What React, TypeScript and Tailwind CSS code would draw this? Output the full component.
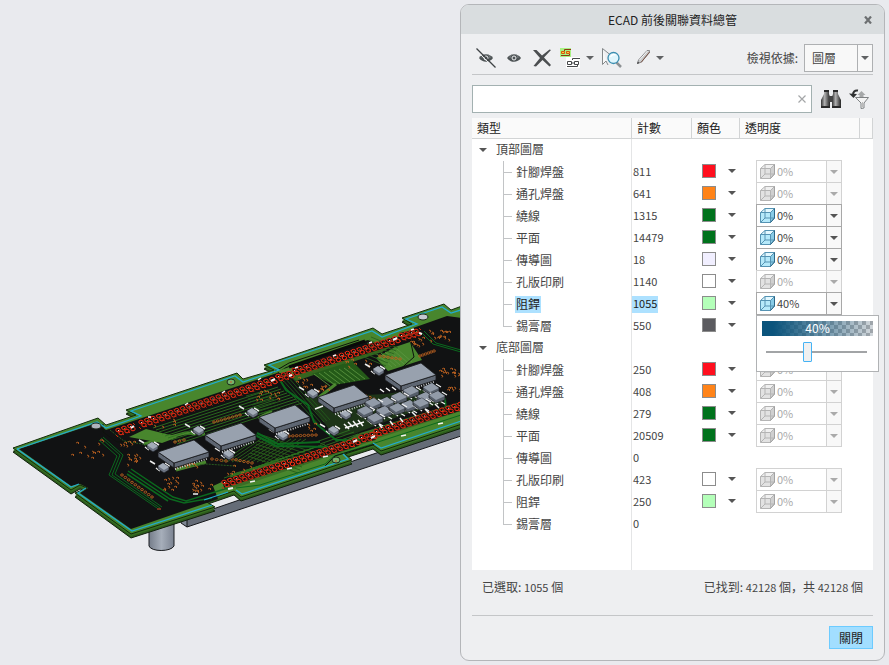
import { useState } from "react";
import { clsx } from "clsx";

type Layer = {
  name: string;
  count: number;
  color?: string;
  opacity?: "on" | "off";
};

const groups: { name: string; layers: Layer[] }[] = [
  {
    name: "頂部圖層",
    layers: [
      { name: "針腳焊盤", count: 811, color: "bg-[#ff0f1e]", opacity: "off" },
      { name: "通孔焊盤", count: 641, color: "bg-[#ff8318]", opacity: "off" },
      { name: "繞線", count: 1315, color: "bg-[#00721c]", opacity: "on" },
      { name: "平面", count: 14479, color: "bg-[#00721c]", opacity: "on" },
      { name: "傳導圖", count: 18, color: "bg-[#f1efff]", opacity: "on" },
      { name: "孔版印刷", count: 1140, color: "bg-white", opacity: "off" },
      { name: "阻銲", count: 1055, color: "bg-[#b4ffb9]", opacity: "on" },
      { name: "錫膏層", count: 550, color: "bg-[#5b5b5f]" },
    ],
  },
  {
    name: "底部圖層",
    layers: [
      { name: "針腳焊盤", count: 250, color: "bg-[#ff0f1e]", opacity: "off" },
      { name: "通孔焊盤", count: 408, color: "bg-[#ff8318]", opacity: "off" },
      { name: "繞線", count: 279, color: "bg-[#00721c]", opacity: "off" },
      { name: "平面", count: 20509, color: "bg-[#00721c]", opacity: "off" },
      { name: "傳導圖", count: 0 },
      { name: "孔版印刷", count: 423, color: "bg-white", opacity: "off" },
      { name: "阻銲", count: 250, color: "bg-[#b4ffb9]", opacity: "off" },
      { name: "錫膏層", count: 0 },
    ],
  },
];

function Caret({ className = "text-[#606264]" }: { className?: string }) {
  return (
    <svg viewBox="0 0 8 4" className={clsx("h-1 w-2 shrink-0", className)} fill="currentColor" aria-hidden="true">
      <path d="M0 0h8L4 4z" />
    </svg>
  );
}

function CubeIcon({ off }: { off: boolean }) {
  const line = off ? "#b4b4b4" : "#5593b3";
  return (
    <svg viewBox="0 0 15 15" className="size-[15px] shrink-0" fill="none" stroke={line} aria-hidden="true">
      <path d="M.5 4.5 5 .5h9.5l-4 4z" fill={off ? "#f0f0f0" : "#e3f8ff"} />
      <path d="M.5 4.5h10v10H.5z" fill={off ? "#e2e2e2" : "#b5e9fa"} />
      <path d="M10.5 4.5l4-4v9.500l-4 4.500z" fill={off ? "#cfcfcf" : "#88cbe6"} />
      <path d="M5 .5v9.500h9.500M5 10 .5 14.500" />
      <path d="M14.500.5V10l-4 4.500" stroke={off ? "#a2a2a2" : "#2f6785"} />
    </svg>
  );
}

/* ---------- board ---------- */

const outline =
  "13,448 98,418 106,425 136,415 126,410 237,373 243,379 274,370 264,365 373,328 382,334 412,324 402,318 444,304 451,310 462,306 462,424 381,451 373,445 345,454 352,460 241,497 234,491 205,501 215,507 131,534 75,493 87,488 80,485 71,490";

const cyanTop =
  "17,449 97,422 106,428 141,416 131,411 235,376 243,382 279,370 269,365 372,331 382,337 417,324 406,319 442,307 451,313 461,310";
const cyanBottom = "17,449 71,487 79,484 M86,488 78,493 132,531 212,505 M204,500 228,492 M236,490 242,494 348,459 343,454 M373,443 381,448 461,421";

const chips = [
  [158, 452],
  [205, 435],
  [259, 417],
  [318, 397],
  [385, 375],
];

const smallParts = [
  [152, 446], [198, 430], [252, 412], [163, 467], [228, 454], [282, 435], [312, 393], [333, 430], [378, 370], [345, 414],
];

const cluster = [
  [431, 388], [411, 391], [425, 397], [437, 396], [399, 397], [409, 405], [421, 403], [386, 402], [373, 403], [365, 411], [384, 411], [397, 408], [375, 418],
];

// x1, y1, x2, y2 of every run of pins
const pinRuns = [
  [119, 431, 131, 427],
  [142, 423, 273, 380],
  [279, 377, 290, 374],
  [295, 371, 396, 339],
  [402, 336, 417, 332],
  [225, 483, 356, 441],
  [362, 438, 373, 435],
  [377, 432, 461, 405],
];

// x, y, width, height, amount
const viaFields = [
  [68, 436, 34, 22, 12], [116, 442, 22, 5, 7], [126, 454, 18, 11, 10], [161, 477, 16, 14, 13], [190, 481, 20, 10, 15],
  [178, 462, 22, 4, 9], [256, 390, 22, 10, 14], [150, 418, 28, 8, 6],
  [296, 378, 14, 12, 8], [316, 385, 14, 6, 8], [408, 336, 14, 9, 11],
  [429, 330, 20, 10, 16], [438, 368, 22, 8, 16], [446, 386, 15, 5, 6], [340, 358, 30, 10, 8],
  [305, 418, 10, 14, 6], [350, 398, 18, 6, 6], [400, 385, 14, 6, 5], [225, 465, 40, 10, 10],
];

// x1, y1, x2, y2, amount
const viaRows = [
  [122, 475, 152, 497, 10], [214, 422, 240, 415, 8], [289, 436, 316, 435, 8], [380, 356, 400, 359, 6], [420, 356, 434, 351, 6],
  [232, 459, 252, 463, 6], [212, 459, 226, 461, 4], [176, 467, 190, 463, 4], [175, 442, 184, 440, 3], [366, 396, 374, 399, 3],
];

// small repeatable noise in 0..1
function noise(n: number) {
  const v = Math.sin(n * 127.1 + 11.7) * 43758.5453;
  return v - Math.floor(v);
}

function Pins() {
  return (
    <g>
      {pinRuns.map(([x1, y1, x2, y2]) => (
        <path key={x1} d={`M${x1 - 2} ${y1 + 1}L${x2 + 2} ${y2 + 1}`} stroke="#1a1410" strokeWidth="8" />
      ))}
      <g fill="#15100d" stroke="#f02c14" strokeWidth="1">
        {pinRuns.flatMap(([x1, y1, x2, y2]) => {
          const n = Math.max(2, Math.round((x2 - x1) / 6));
          return Array.from({ length: n + 1 }, (_, i) => {
            const x = x1 + ((x2 - x1) * i) / n;
            const y = y1 + ((y2 - y1) * i) / n;
            return (
              <g key={`${x1}-${i}`}>
                <path d={`M${x - 3} ${y + 4}l2 2M${x + 2} ${y - 4}l2 2`} stroke="#c8280e" />
                <ellipse cx={x - 1} cy={y - 1} rx="2.200" ry="1.800" />
                <ellipse cx={x + 2} cy={y + 2} rx="2.200" ry="1.800" />
                <path d={`M${x - 1} ${y - 1}h1v1h-1z`} stroke="none" fill={i % 2 ? "#58963c" : "#d0d0c0"} />
              </g>
            );
          });
        })}
      </g>
    </g>
  );
}

function Vias() {
  return (
    <g fill="none" stroke="#b9601f" strokeWidth=".9">
      {viaFields.flatMap(([x, y, w, h, n], f) =>
        Array.from({ length: n }, (_, i) => {
          const vx = Math.round(x + noise(f * 31 + i) * w);
          const vy = Math.round(y + noise(f * 57 + i * 3 + 1) * h);
          return <path key={`${f}-${i}`} d={i % 2 ? `M${vx} ${vy}l2-1 1 1-1 1` : `M${vx} ${vy}l2 1-1 1.500`} />;
        })
      )}
      {viaRows.flatMap(([x1, y1, x2, y2, n]) =>
        Array.from({ length: n }, (_, i) => (
          <ellipse key={`${x1}-${i}`} cx={x1 + ((x2 - x1) * i) / (n - 1)} cy={y1 + ((y2 - y1) * i) / (n - 1)} rx="1.400" ry="1.100" />
        ))
      )}
    </g>
  );
}

function fan(n: number, from: number[], to: number[], step: number[]) {
  return Array.from({ length: n }, (_, i) => {
    const dx = step[0] * i;
    const dy = step[1] * i;
    return `M${from[0] + dx} ${from[1] + dy}L${to[0] + dx} ${to[1] + dy}`;
  }).join("");
}

function Board() {
  return (
    <svg viewBox="0 0 460 665" className="h-auto w-full" role="img" aria-label="PCB">
      <defs>
        <linearGradient id="post">
          <stop offset="0" stopColor="#757d8a" />
          <stop offset=".5" stopColor="#a6aeba" />
          <stop offset="1" stopColor="#7b8391" />
        </linearGradient>
      </defs>
      <path d="M149 515v31c2 6 22 6 25 0v-34z" fill="url(#post)" stroke="#1b1d20" />
      <path d="M181 520 461 424v12L187 527z" fill="#656c77" stroke="#15171a" />
      <path d="M181 519v4l6 4v-9z" fill="#7d8592" stroke="#15171a" />
      <polygon points={outline} transform="translate(0 4)" fill="#2c5a1c" stroke="#10200b" />
      <polygon points={outline} transform="translate(0 2)" fill="#376f22" />
      <polygon points={outline} fill="#48862d" stroke="#122b0b" />

      {/* dark solder mask */}
      <path
        d="M19 449 97 423 106 430 277 373 286 367 361 342 368 340 376 344 411 333 413 328 447 316 461 318V402L378 427 360 436 224 481 213 486 218 499 131 529 80 493 88 488 80 484 71 486z"
        fill="#111213"
      />
      <path d="M287 374 364 349 376 350 398 338 399 342 382 352 296 381z" fill="#35651f" />
      <path d="M129 437 146 429 178 437 162 443z" fill="#48862d" />
      <path d="M395 347 410 342 422 360 388 371 376 358z" fill="#48862d" />
      <path d="M312 374 352 361 370 379 334 385z" fill="#245a18" />
      <path d="M278 371 292 366 297 373 284 380z" fill="#48862d" />
      <path d="M231 474 262 465 330 448 360 433 440 409 461 402V411L376 439 352 449 244 485 226 490z" fill="#3a6d26" />
      <path d="M305 398 320 417 334 436 354 434 400 416 443 403 436 392 420 389 385 394z" fill="#1d3418" />
      <path d="M144 444 185 433 205 434M176 470 206 462M258 418 272 411M318 398 336 384" stroke="#48862d" strokeWidth="3" fill="none" />
      <path d="M289 367 365 341" stroke="#090a09" strokeWidth="3" />

      <g fill="none" stroke="#2c7020" strokeWidth=".9">
        <path d={fan(9, [153, 428], [278, 387], [3, 2])} />
        <path d={fan(9, [246, 396], [268, 390], [2, 3])} stroke="#255b1c" />
        <path d={fan(11, [222, 462], [256, 439], [5, 0])} stroke="#2a631c" />
        <path d={fan(9, [224, 478], [277, 460], [6, -2])} />
        <path d={fan(8, [262, 435], [312, 452], [-2, 3])} stroke="#285f1b" />
        <path d={fan(8, [314, 374], [330, 386], [5, -1])} stroke="#59923e" />
        <path d={fan(5, [278, 379], [318, 424], [3, -1])} stroke="#225b1c" />
        <path d={fan(6, [377, 354], [392, 367], [4, -1])} stroke="#5a9440" />
        <path d={fan(7, [359, 355], [386, 366], [2, -3])} stroke="#28601d" />
        <path d={fan(6, [316, 442], [350, 430], [4, 2])} />
      </g>
      <g fill="none" stroke="#0b681e" strokeWidth="1">
        <path d="M101 438 120 455 112 475 160 508M99 440 117 456 109 475 157 508M103 437 123 455 115 474 162 507" />
        <path d="M128 471 170 499 184 503 212 498M131 469 173 497 186 501 228 488M127 474 168 501" strokeWidth="1.500" />
        <path d="M255 435 276 446 330 447M257 433 278 444 320 442" strokeWidth="2" />
        <path d="M280 380 286 390 308 405 314 422 336 440 370 440" strokeWidth="2" />
        <path d="M236 488 260 485 325 464 334 456 375 443 461 415" />
        <path d="M422 333 433 344 461 352M424 331 436 343 461 350" />
        <path d="M439 394 445 399 446 409" strokeWidth="2" />
      </g>
      <g fill="none" stroke="#0e120d" strokeWidth="1">
        <path d="M103 424v8l14 10 12-1M272 373l17-10 70-23M413 333l-3 6 4 18-18 16M325 466l10-10 40-12" />
      </g>
      <path d="M176 468 206 464 235 466M110 430 124 441 160 447" stroke="#275b20" strokeDasharray="2 1" fill="none" />

      <polyline points={cyanTop} fill="none" stroke="#22abd0" strokeWidth="1.300" />
      <path d={`M${cyanBottom}`} fill="none" stroke="#22abd0" strokeWidth="1.300" />

      <Vias />
      <Pins />

      {/* mounting holes and drill marks */}
      <g stroke="#1d2a1c">
        <ellipse cx="96" cy="426" rx="5" ry="3" fill="#aeb4bb" />
        <ellipse cx="423" cy="317" rx="5" ry="3" fill="#c4c9d0" />
        <ellipse cx="231" cy="382" rx="4" ry="3" fill="#75b56c" />
        <ellipse cx="336" cy="460" rx="4" ry="3" fill="#75b56c" />
      </g>
      <g fill="none" stroke="#f2f2f2" strokeWidth="2">
        <path d="M131 428l3-2M271 381l4-2M289 376l3-1M393 340l4-2M419 333l3 1M353 442l4-2M371 438l4-2M228 489l5-1" />
        <path d="M148 417h3M185 405l3-2M222 393l3-2M258 380l3-2M295 368l3-1M333 356l3-1M369 343l3-1M411 330l3-1M193 494h5M250 482l5-1M287 469l5-1M323 457l5-1M401 436l5-1M438 424l5-1" strokeWidth="1.500" />
      </g>
      <g stroke="#d4582a" strokeWidth="1.200">
        <path d="M100 440h3M157 509h4M230 382h2M335 461h2" />
      </g>

      {smallParts.map(([x, y]) => (
        <g key={`${x}-${y}`} transform={`translate(${x} ${y})`}>
          <path d="M-7 1l4 3M2-4l5 3M-13-6l5 3" stroke="#ececec" strokeWidth="1.500" />
          <path d="M-5-1 0-4 6 0V3L1 6-5 2z" fill="#6a7280" stroke="#16181b" strokeWidth=".7" />
          <path d="M-5-1 0-4 6 0 1 3z" fill="#a3acb8" />
        </g>
      ))}
      {chips.map(([x, y]) => (
        <g key={x} transform={`translate(${x} ${y})`}>
          <path d="M17 17 50 6" stroke="#d4d6d8" strokeWidth="2.500" strokeDasharray="1 1.500" />
          <path d="M0 0v5l16 11V11zM16 11v5l35-11V0z" fill="#5f6773" stroke="#16181b" strokeWidth=".8" />
          <path d="M0 0 36-12 51 0 16 11z" fill="#98a1ae" stroke="#16181b" strokeWidth=".8" />
        </g>
      ))}
      {cluster.map(([x, y]) => (
        <g key={`${x}-${y}`} transform={`translate(${x} ${y})`}>
          <path d="M-8 2l5 4M-3 5l4 3M3 5l5 3M5-4l5 3" stroke="#f2f2f2" strokeWidth="1.300" />
          <path d="M-8-1 1-5 8 0V4L-1 7-8 2z" fill="#565e69" stroke="#16181b" strokeWidth=".7" />
          <path d="M-8-1 1-5 8 0-1 4z" fill="#929ba8" />
        </g>
      ))}
      <path d="M344 424l5 5M348 422l5 5M353 421l5 6M358 420l5 6M345 428l19-6M380 389l4 3M386 388l4 3M392 387l4 3M379 424l3 4M390 421l3 4M400 418l3 4M412 412l4 4M425 409l4 4M435 404l4 4M315 409l8-3" stroke="#f5f5f5" strokeWidth="1.500" />
    </svg>
  );
}

/* ---------- toolbar icons ---------- */

function EyeIcon({ hidden = false }: { hidden?: boolean }) {
  return (
    <svg viewBox="0 0 20 20" className="size-5" fill="none" aria-hidden="true">
      <path d="M3 10C6.500 5 13.500 5 17 10 13.500 15 6.500 15 3 10z" fill="#4d5355" />
      <path d="M6 10c0-2 1-3 2-3.500M14 10c0-2-1-3-2-3.500" stroke="#8b9092" strokeWidth=".8" />
      <circle cx="10" cy="10" r="2" stroke="#eeeff1" strokeWidth="1" />
      {hidden && (
        <>
          <path d="M0 2 18 20" stroke="#eeeff1" strokeWidth="1" />
          <path d="M.5.5l19 19" stroke="#3e4244" strokeWidth="1.200" />
        </>
      )}
    </svg>
  );
}

function CrossIcon() {
  return (
    <svg viewBox="0 0 20 20" className="size-5" aria-hidden="true">
      <path d="M1 2h3.500L10 7.500 17.500 1.500 19 2l-7 7.500L19 17l-1.500 1.500L10.500 12 4 18.500 1.500 18 8 10z" fill="#4b4e50" />
    </svg>
  );
}

function LayersIcon() {
  return (
    <svg viewBox="0 0 20 20" className="size-5" fill="none" aria-hidden="true">
      <path d="M0 0h11v9H0z" fill="#a8f283" />
      <path d="M4.500 3V1.500H11M1 7.500h8.500V6" stroke="#8a3b12" />
      <path d="M1.500 3.500h3v2h-3zM6.500 3.500h3v2h-3z" fill="#ffc83c" stroke="#d4560e" />
      <path d="M6 9h14v11H6z" fill="#fff" />
      <path d="M12.500 12v-1.500H20M7 18.500h10.500V17M7.500 13.500h4v3h-4zM14.500 13.500h4v3h-4zM11.500 15h3" stroke="#46484a" />
    </svg>
  );
}

function PickIcon() {
  return (
    <svg viewBox="0 0 20 20" className="size-5" fill="none" aria-hidden="true">
      <path d="M.5.5v16L4 13l2 4M.5.5 11 9" fill="#f8f8f8" stroke="#85898b" />
      <path d="m14.500 14.500 4.500 4.500" stroke="#8d9194" strokeWidth="2.500" />
      <circle cx="11.500" cy="10" r="5.500" fill="#e0f6fd" stroke="#3c8eb0" strokeWidth="1.300" />
      <path d="M8.500 9c1-2 3-3 5-2" stroke="#fff" strokeWidth="1.500" />
    </svg>
  );
}

function PencilIcon() {
  return (
    <svg viewBox="0 0 20 20" className="size-5" fill="none" aria-hidden="true">
      <path d="m7.500 15.500 1-3.500L17 2.500h2.500v2L11.500 14z" fill="#c9cacb" stroke="#77797b" strokeWidth=".8" />
      <path d="m11 14.500 8.500-10.500" stroke="#7c5648" strokeWidth="1" />
      <path d="m9.500 12 8-9" stroke="#f6f6f6" strokeWidth="1" />
      <path d="m7 16 .8-2.500L9.500 15z" fill="#444" />
    </svg>
  );
}

function BinocularsIcon() {
  return (
    <svg viewBox="0 0 22 20" className="h-5 w-[22px]" aria-hidden="true">
      <defs>
        <linearGradient id="barrel">
          <stop offset="0" stopColor="#333" />
          <stop offset=".4" stopColor="#b0b0b0" />
          <stop offset="1" stopColor="#242424" />
        </linearGradient>
      </defs>
      <path d="M4 1h5v4l1 3v11H1v-8l3-6z" fill="url(#barrel)" />
      <path d="M13 1h5v4l3 6v8h-9V8l1-3z" fill="url(#barrel)" />
      <path d="M9 7h4v6H9z" fill="#444" />
      <path d="M4 1h5v2H4zM13 1h5v2h-5zM1 17h9v2H1zM12 17h9v2h-9z" fill="#2a2a2a" />
    </svg>
  );
}

function FilterResetIcon() {
  return (
    <svg viewBox="0 0 20 20" className="size-5" fill="none" aria-hidden="true">
      <path d="m12.500 2 4 4h-2v2h-4V6h-2z" fill="#a6a8a9" />
      <path d="M6.500 8.500h13L15 14v5l-3 .5V14z" fill="#f4f4f4" stroke="#7f8284" />
      <path d="M13.500 13v5" stroke="#bbb" />
      <path d="M9 1.500C5.500 1 4 3 4 6" stroke="#2f3132" strokeWidth="2" />
      <path d="M0 4.500 4.500 9 8 5z" fill="#2f3132" />
    </svg>
  );
}

/* ---------- dialog ---------- */

function OpacityPopup({ value, onChange }: { value: number; onChange: (v: number) => void }) {
  return (
    <div className="absolute top-[23px] left-0 z-10 flex h-[57px] w-[123px] flex-col gap-1.5 border border-[#b0b2b4] bg-white p-[5px]">
      <div className="h-[15px] bg-[repeating-conic-gradient(#a9abae_0_25%,#dcdddf_0_50%)] bg-size-[8px_8px]">
        <div className="h-full bg-linear-to-r from-[#0b547c] from-10% to-[#0b547c]/5 text-center text-xs leading-[14px] text-white">{value}%</div>
      </div>
      <input
        type="range"
        aria-label="透明度"
        value={value}
        onChange={(e) => onChange(Number(e.target.value))}
        className="mr-1.5 ml-1 h-5 appearance-none bg-transparent [&::-webkit-slider-runnable-track]:h-0.5 [&::-webkit-slider-runnable-track]:bg-[#a2a4a6] [&::-webkit-slider-thumb]:-mt-[9px] [&::-webkit-slider-thumb]:h-5 [&::-webkit-slider-thumb]:w-[9px] [&::-webkit-slider-thumb]:appearance-none [&::-webkit-slider-thumb]:rounded-[1px] [&::-webkit-slider-thumb]:border [&::-webkit-slider-thumb]:border-[#45b3f5] [&::-webkit-slider-thumb]:bg-[#f0f0f0]"
      />
    </div>
  );
}

function OpacityBox({ label, off, value, open }: { label: string; off: boolean; value: number; open: boolean }) {
  return (
    <button
      type="button"
      disabled={off}
      aria-label={`${label} 透明度 ${value}%`}
      aria-expanded={open}
      className={clsx(
        "flex h-[23px] w-[86px] items-stretch border bg-white text-[11px]",
        off ? "border-[#d2d2d2] text-[#aaa]" : "border-[#a8a8a8] text-[#444]"
      )}
    >
      <span className="flex flex-1 items-center gap-0.5 pl-[3px]">
        <CubeIcon off={off} />
        {value}%
      </span>
      <span className={clsx("flex w-[15px] items-center justify-center border-l bg-[#f8f8f8]", off ? "border-[#d2d2d2]" : "border-[#a8a8a8]")}>
        <Caret className={off ? "text-[#aaa]" : "text-[#555]"} />
      </span>
    </button>
  );
}

function LayerRow({ layer, last, selected, value, onChange }: { layer: Layer; last: boolean; selected: boolean; value: number; onChange: (v: number) => void }) {
  return (
    <tr className="h-[22px]">
      <td className="p-0">
        <div className="flex h-[22px] pl-[31px]">
          <span className="flex w-[9px] flex-col">
            <span className="h-3 border-b border-l border-[#c2c4c6]" />
            <span className={clsx("flex-1", !last && "border-l border-[#c2c4c6]")} />
          </span>
          <span className={clsx("ml-[3px] self-center px-px pb-0.5 leading-[15px]", selected && "bg-[#ade1ff] text-[#222]")}>{layer.name}</span>
        </div>
      </td>
      <td className="border-l border-[#e4e5e6] p-0">
        <div className="flex">
          <span className={clsx("px-px pb-0.5 text-[11px] leading-[15px]", selected && "bg-[#ade1ff] text-[#222]")}>{layer.count}</span>
        </div>
      </td>
      <td className="p-0">
        {layer.color && (
          <button type="button" aria-label={`${layer.name} 顏色`} className="flex items-center gap-3 pb-0.5 pl-[11px]">
            <span className={clsx("size-[14px] border border-[#8c8c8c]", layer.color)} />
            <Caret className="text-[#555]" />
          </button>
        )}
      </td>
      <td className="p-0">
        {layer.opacity && (
          <div className="relative -mt-px ml-[17px]">
            <OpacityBox label={layer.name} off={layer.opacity === "off"} value={selected ? value : 0} open={selected} />
            {selected && <OpacityPopup value={value} onChange={onChange} />}
          </div>
        )}
      </td>
      <td className="p-0" />
    </tr>
  );
}

export default function App() {
  const [opacity, setOpacity] = useState(40);
  const [query, setQuery] = useState("");

  return (
    <main className="flex min-h-screen items-stretch bg-[#e9eaee] font-['Noto_Sans_CJK_TC',sans-serif] text-xs text-[#444]" lang="zh-TW">
      <section className="min-w-0 flex-1">
        <Board />
      </section>

      <section role="dialog" aria-labelledby="title" className="my-1 mr-1 flex w-[425px] shrink-0 flex-col rounded-[9px] border border-[#b4b6b9] bg-[#eeeff1]">
        <header className="flex h-[29px] items-center rounded-t-lg bg-[#d9dddf] px-2.5">
          <h1 id="title" className="flex-1 pl-3 text-center text-[#222]">
            ECAD 前後關聯資料總管
          </h1>
          <button type="button" aria-label="Close" className="flex w-3 justify-center text-[#6d7072]">
            <svg viewBox="0 0 8 8" className="size-2" stroke="currentColor" strokeWidth="2.200" aria-hidden="true">
              <path d="m1 .5 6 7M7 .5l-6 7" />
            </svg>
          </button>
        </header>

        <div className="flex flex-1 flex-col px-[11px]">
          <div className="flex h-[41px] items-center gap-2 border-b border-[#c4c6c8] pt-2 pl-1">
            <button type="button" aria-label="Hide"><EyeIcon hidden /></button>
            <button type="button" aria-label="Show"><EyeIcon /></button>
            <button type="button" aria-label="Remove"><CrossIcon /></button>
            <button type="button" aria-label="Layers" className="flex items-center gap-1.5"><LayersIcon /><Caret /></button>
            <button type="button" aria-label="Pick"><PickIcon /></button>
            <button type="button" aria-label="Edit" className="flex items-center gap-1.5"><PencilIcon /><Caret /></button>
            <label htmlFor="view" className="ml-auto -mr-0.5">檢視依據:</label>
            <div className="relative">
              <select id="view" className="block h-7 w-[69px] appearance-none border border-[#aeb0b2] bg-[#f8f8f8] pl-[7px]">
                <option>圖層</option>
              </select>
              <span className="pointer-events-none absolute inset-y-px right-px flex w-[15px] items-center justify-center border-l border-[#aeb0b2]">
                <Caret />
              </span>
            </div>
          </div>

          <div className="mt-2.5 flex h-7 items-center">
            <div className="flex h-7 flex-1 items-center border border-[#a3b1b1] bg-white pr-[5px]">
              <input type="text" aria-label="搜尋" value={query} onChange={(e) => setQuery(e.target.value)} className="h-full min-w-0 flex-1 px-1 outline-none" />
              <button type="button" aria-label="Clear" onClick={() => setQuery("")}>
                <svg viewBox="0 0 8 8" className="size-2" stroke="#a4a6a8" strokeWidth="1.200" aria-hidden="true">
                  <path d="m.5.5 7 7M7.500.5l-7 7" />
                </svg>
              </button>
            </div>
            <button type="button" aria-label="Find" className="ml-2"><BinocularsIcon /></button>
            <button type="button" aria-label="Reset filter" className="mr-1 ml-[7px]"><FilterResetIcon /></button>
          </div>

          <div className="mt-[5px] flex flex-1 flex-col bg-white">
            <table className="w-full table-fixed border-separate border-spacing-0">
              <colgroup>
                <col />
                <col className="w-[60px]" />
                <col className="w-[48px]" />
                <col className="w-[120px]" />
                <col className="w-[14px]" />
              </colgroup>
              <thead className="bg-[#fafafa] text-left text-[#222]">
                <tr className="h-[21px] *:border-b *:border-[#d2d4d5] *:p-0 *:font-normal">
                  <th><span className="pl-[5px]">類型</span></th>
                  <th className="border-l"><span className="pl-[5px]">計數</span></th>
                  <th className="border-l"><span className="pl-[5px]">顏色</span></th>
                  <th className="border-l"><span className="pl-[5px]">透明度</span></th>
                  <th className="border-x" />
                </tr>
              </thead>
              {groups.map((group, g) => (
                <tbody key={group.name}>
                  <tr className="h-[22px]">
                    <td className="p-0">
                      <button type="button" aria-expanded="true" className="flex h-[22px] items-center gap-[9px] pl-[7px]">
                        <Caret className="text-[#555]" />
                        <span className="pb-0.5">{group.name}</span>
                      </button>
                    </td>
                    <td className="border-l border-[#e4e5e6]" />
                    <td colSpan={3} />
                  </tr>
                  {group.layers.map((layer, i) => (
                    <LayerRow
                      key={layer.name}
                      layer={layer}
                      last={i === group.layers.length - 1}
                      selected={g === 0 && layer.name === "阻銲"}
                      value={opacity}
                      onChange={setOpacity}
                    />
                  ))}
                </tbody>
              ))}
            </table>
            <div className="flex flex-1 justify-end">
              <div className="w-[242px] border-l border-[#e4e5e6]" />
            </div>
          </div>

          <footer>
            <div className="flex h-[45px] justify-between px-2.5 pt-[9px]">
              <p>
                已選取: <span className="text-[11px]">1055</span> 個
              </p>
              <p>
                已找到: <span className="text-[11px]">42128</span> 個
                <span lang="zh-CN" className="font-['Noto_Sans_CJK_SC',sans-serif]">，</span>共 <span className="text-[11px]">42128</span> 個
              </p>
            </div>
            <div className="flex justify-end border-t border-[#c4c6c8] pt-2.5 pb-[11px]">
              <button type="button" className="h-[23px] w-11 border border-[#6ccbff] bg-[#a2deff] text-[#222]">
                關閉
              </button>
            </div>
          </footer>
        </div>
      </section>
    </main>
  );
}
